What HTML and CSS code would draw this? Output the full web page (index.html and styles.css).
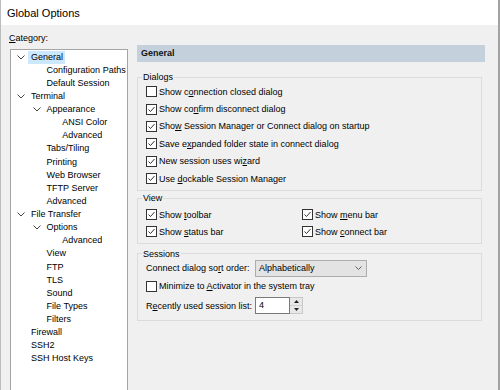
FILE: index.html
```html
<!DOCTYPE html>
<html>
<head>
<meta charset="utf-8">
<title>Global Options</title>
<link rel="stylesheet" href="styles.css">
</head>
<body>
<div class="window">
  <div class="titlebar">Global Options</div>
  <div class="content">
    <div class="left">
      <div class="cat-label"><u>C</u>ategory:</div>
      <div class="tree">
        <div class="row l0"><span class="tog"><svg width="8" height="5" viewBox="0 0 8 5"><polyline points="0.5,0.5 4,4 7.5,0.5" fill="none" stroke="#444" stroke-width="1"/></svg></span><span class="txt sel">General</span></div>
        <div class="row l1"><span class="tog"></span><span class="txt">Configuration Paths</span></div>
        <div class="row l1"><span class="tog"></span><span class="txt">Default Session</span></div>
        <div class="row l0"><span class="tog"><svg width="8" height="5" viewBox="0 0 8 5"><polyline points="0.5,0.5 4,4 7.5,0.5" fill="none" stroke="#444" stroke-width="1"/></svg></span><span class="txt">Terminal</span></div>
        <div class="row l1"><span class="tog"><svg width="8" height="5" viewBox="0 0 8 5"><polyline points="0.5,0.5 4,4 7.5,0.5" fill="none" stroke="#444" stroke-width="1"/></svg></span><span class="txt">Appearance</span></div>
        <div class="row l2"><span class="tog"></span><span class="txt">ANSI Color</span></div>
        <div class="row l2"><span class="tog"></span><span class="txt">Advanced</span></div>
        <div class="row l1"><span class="tog"></span><span class="txt">Tabs/Tiling</span></div>
        <div class="row l1"><span class="tog"></span><span class="txt">Printing</span></div>
        <div class="row l1"><span class="tog"></span><span class="txt">Web Browser</span></div>
        <div class="row l1"><span class="tog"></span><span class="txt">TFTP Server</span></div>
        <div class="row l1"><span class="tog"></span><span class="txt">Advanced</span></div>
        <div class="row l0"><span class="tog"><svg width="8" height="5" viewBox="0 0 8 5"><polyline points="0.5,0.5 4,4 7.5,0.5" fill="none" stroke="#444" stroke-width="1"/></svg></span><span class="txt">File Transfer</span></div>
        <div class="row l1"><span class="tog"><svg width="8" height="5" viewBox="0 0 8 5"><polyline points="0.5,0.5 4,4 7.5,0.5" fill="none" stroke="#444" stroke-width="1"/></svg></span><span class="txt">Options</span></div>
        <div class="row l2"><span class="tog"></span><span class="txt">Advanced</span></div>
        <div class="row l1"><span class="tog"></span><span class="txt">View</span></div>
        <div class="row l1"><span class="tog"></span><span class="txt">FTP</span></div>
        <div class="row l1"><span class="tog"></span><span class="txt">TLS</span></div>
        <div class="row l1"><span class="tog"></span><span class="txt">Sound</span></div>
        <div class="row l1"><span class="tog"></span><span class="txt">File Types</span></div>
        <div class="row l1"><span class="tog"></span><span class="txt">Filters</span></div>
        <div class="row l0"><span class="tog"></span><span class="txt">Firewall</span></div>
        <div class="row l0"><span class="tog"></span><span class="txt">SSH2</span></div>
        <div class="row l0"><span class="tog"></span><span class="txt">SSH Host Keys</span></div>
      </div>
    </div>
    <div class="right">
      <div class="header">General</div>

      <fieldset class="group dialogs">
        <legend>Dialogs</legend>
        <label class="cb"><span class="box"></span><span>Show c<u>o</u>nnection closed dialog</span></label>
        <label class="cb"><span class="box"><svg width="9" height="9" viewBox="0 0 9 9"><polyline points="1.5,4.5 3.5,6.5 7.5,2" fill="none" stroke="#333" stroke-width="1"/></svg></span><span>Show co<u>n</u>firm disconnect dialog</span></label>
        <label class="cb"><span class="box"><svg width="9" height="9" viewBox="0 0 9 9"><polyline points="1.5,4.5 3.5,6.5 7.5,2" fill="none" stroke="#333" stroke-width="1"/></svg></span><span>Sho<u>w</u> Session Manager or Connect dialog on startup</span></label>
        <label class="cb"><span class="box"><svg width="9" height="9" viewBox="0 0 9 9"><polyline points="1.5,4.5 3.5,6.5 7.5,2" fill="none" stroke="#333" stroke-width="1"/></svg></span><span>Save e<u>x</u>panded folder state in connect dialog</span></label>
        <label class="cb"><span class="box"><svg width="9" height="9" viewBox="0 0 9 9"><polyline points="1.5,4.5 3.5,6.5 7.5,2" fill="none" stroke="#333" stroke-width="1"/></svg></span><span>New session uses wi<u>z</u>ard</span></label>
        <label class="cb"><span class="box"><svg width="9" height="9" viewBox="0 0 9 9"><polyline points="1.5,4.5 3.5,6.5 7.5,2" fill="none" stroke="#333" stroke-width="1"/></svg></span><span>Use <u>d</u>ockable Session Manager</span></label>
      </fieldset>

      <fieldset class="group view">
        <legend>View</legend>
        <div class="two-col">
          <label class="cb"><span class="box"><svg width="9" height="9" viewBox="0 0 9 9"><polyline points="1.5,4.5 3.5,6.5 7.5,2" fill="none" stroke="#333" stroke-width="1"/></svg></span><span>Show <u>t</u>oolbar</span></label>
          <label class="cb"><span class="box"><svg width="9" height="9" viewBox="0 0 9 9"><polyline points="1.5,4.5 3.5,6.5 7.5,2" fill="none" stroke="#333" stroke-width="1"/></svg></span><span>Show <u>m</u>enu bar</span></label>
          <label class="cb"><span class="box"><svg width="9" height="9" viewBox="0 0 9 9"><polyline points="1.5,4.5 3.5,6.5 7.5,2" fill="none" stroke="#333" stroke-width="1"/></svg></span><span>Show <u>s</u>tatus bar</span></label>
          <label class="cb"><span class="box"><svg width="9" height="9" viewBox="0 0 9 9"><polyline points="1.5,4.5 3.5,6.5 7.5,2" fill="none" stroke="#333" stroke-width="1"/></svg></span><span>Show <u>c</u>onnect bar</span></label>
        </div>
      </fieldset>

      <fieldset class="group sessions">
        <legend>Sessions</legend>
        <div class="field-row first">
          <span class="flabel">Connect dialog so<u>r</u>t order:</span>
          <div class="select"><span>Alphabetically</span><svg width="7" height="4" viewBox="0 0 7 4"><polyline points="0.5,0.5 3.5,3.5 6.5,0.5" fill="none" stroke="#606060" stroke-width="1"/></svg></div>
        </div>
        <label class="cb tray"><span class="box"></span><span>Minimize to <u>A</u>ctivator in the system tray</span></label>
        <div class="field-row spin-row">
          <span class="flabel">R<u>e</u>cently used session list:</span>
          <div class="spin">
            <span class="spin-val">4</span>
            <span class="spin-btns">
              <span class="sbtn"><svg width="5" height="3" viewBox="0 0 5 3"><polygon points="0,3 2.5,0 5,3" fill="#222"/></svg></span>
              <span class="sbtn"><svg width="5" height="3" viewBox="0 0 5 3"><polygon points="0,0 5,0 2.5,3" fill="#222"/></svg></span>
            </span>
          </div>
        </div>
      </fieldset>
    </div>
  </div>
</div>
</body>
</html>
```
FILE: styles.css
```css
* { box-sizing: border-box; }

html, body {
  margin: 0;
  padding: 0;
}

body {
  width: 500px;
  height: 390px;
  overflow: hidden;
  background: #f0f0f0;
  font-family: "Liberation Sans", Arial, sans-serif;
  font-size: 9px;
  color: #000;
}

.window {
  height: 390px;
  border-left: 1px solid #bcbcbc;
  border-right: 2px solid #a3a3a3;
  display: flex;
  flex-direction: column;
}

.titlebar {
  height: 25px;
  flex: none;
  background: #fff;
  padding-left: 6px;
  font-size: 11px;
  line-height: 26px;
  color: #000;
}

.content {
  flex: 1;
  display: flex;
  min-height: 0;
}

.left {
  width: 127px;
  flex: none;
  padding-left: 8px;
  padding-top: 7px;
  display: flex;
  flex-direction: column;
}

.cat-label {
  line-height: 12px;
  height: 12px;
}

.tree {
  margin-top: 5px;
  margin-left: 1px;
  width: 118px;
  flex: 1;
  background: #fff;
  border: 1px solid #a5a5a5;
  border-bottom: none;
  padding-top: 0.5px;
}

.row {
  height: 13.14px;
  display: flex;
  align-items: center;
  white-space: nowrap;
}

.row.l0 { padding-left: 3px; }
.row.l1 { padding-left: 18.6px; }
.row.l2 { padding-left: 34.2px; }

.tog {
  width: 14px;
  height: 13px;
  flex: none;
  display: flex;
  align-items: center;
  justify-content: center;
}

.tog svg { display: block; }

.txt {
  padding: 0 2px 0 3px;
  line-height: 13px;
}

.txt.sel {
  background: #cce8ff;
}

.right {
  margin-left: 9px;
  width: 348px;
  flex: none;
  padding-top: 20px;
}

.header {
  height: 17px;
  line-height: 17px;
  padding-left: 4px;
  background: #c4d1dd;
  font-weight: bold;
  color: #111;
}

.group {
  width: 345px;
  margin: 0;
  padding: 0;
  border: 1px solid #dcdcdc;
  min-width: 0;
}

.group legend {
  margin-left: 4px;
  padding: 0 1px;
  line-height: 12px;
  height: 12px;
}

.dialogs {
  margin-top: 9px;
  padding-bottom: 3px;
}

.view {
  margin-top: 1px;
  padding-top: 1.5px;
  padding-bottom: 2px;
}

.sessions {
  margin-top: 4px;
  padding-bottom: 6px;
}

.cb {
  display: flex;
  align-items: center;
  height: 17.4px;
  margin-left: 8px;
  white-space: nowrap;
}

.box {
  width: 11px;
  height: 11px;
  flex: none;
  border: 1px solid #333;
  background: #fff;
  margin-right: 2px;
  display: flex;
  align-items: center;
  justify-content: center;
}

.box svg { display: block; }

.two-col {
  display: grid;
  grid-template-columns: 156px auto;
}

.field-row {
  display: flex;
  align-items: center;
  margin-left: 8px;
}

.field-row.first {
  height: 17px;
}

.cb.tray {
  height: 19px;
}

.field-row.spin-row {
  margin-top: 1.5px;
  height: 17px;
}

.flabel {
  width: 109px;
  flex: none;
  white-space: nowrap;
}

.select {
  width: 112px;
  height: 17px;
  background: #e3e3e3;
  border: 1px solid #adadad;
  display: flex;
  align-items: center;
  justify-content: space-between;
  padding: 0 4px 0 3px;
}

.select svg { display: block; }

.spin {
  display: flex;
  height: 17px;
}

.spin-val {
  width: 35px;
  height: 17px;
  border: 1px solid #7a7a7a;
  background: #fff;
  padding-left: 3px;
  line-height: 15px;
}

.spin-btns {
  width: 13px;
  height: 17px;
  display: flex;
  flex-direction: column;
  border: 1px solid #c8c8c8;
  border-left: none;
  background: #f4f4f4;
}

.sbtn {
  flex: 1;
  display: flex;
  align-items: center;
  justify-content: center;
  background: #e8e8e8;
  border-bottom: 1px solid #d0d0d0;
}

.sbtn:last-child { border-bottom: none; }

.sbtn svg { display: block; }
```
